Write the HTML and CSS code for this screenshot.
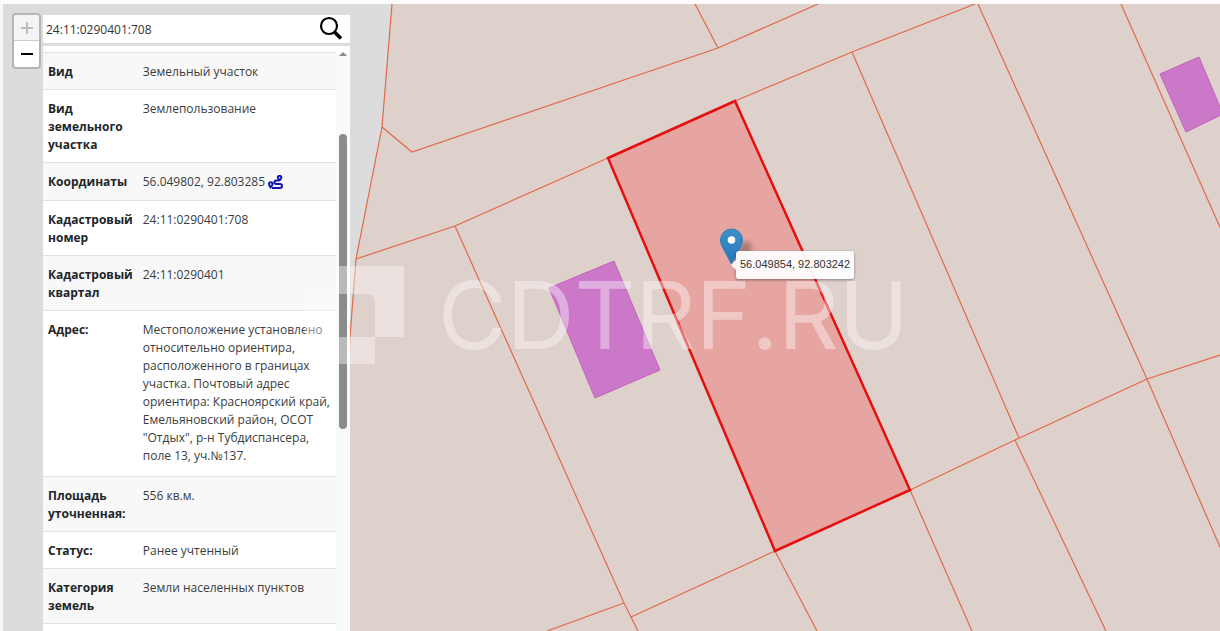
FILE: index.html
```html
<!DOCTYPE html>
<html lang="ru">
<head>
<meta charset="utf-8">
<meta name="viewport" content="width=device-width, initial-scale=1">
<title>Кадастровая карта</title>
<link rel="stylesheet" href="styles.css">
</head>
<body>
<main class="map">
  <svg class="map-canvas" aria-hidden="true">
    <g transform="translate(-3 -4)">
      <path class="land" d="M392 0 392 4 382 127 356 259 350 337 340 640 340 2000H4000V0Z"/>
      <g class="parcels">
        <path d="M392 4 382 127 356 259 350 337 340 640"/>
        <path d="M382 127 412 152 718 48 818 4"/>
        <path d="M695 4 718 48"/>
        <path d="M356 259 455 226 608 158 735 101 852 52 975 4"/>
        <path d="M455 226 624 603 631 617 638 631"/>
        <path d="M624 603 547 631"/>
        <path d="M631 617 775 551 910 490 1015 440 1147 379 1220 355 1317 323"/>
        <path d="M775 551 817 631"/>
        <path d="M910 490 972 631"/>
        <path d="M852 52 1019 438"/>
        <path d="M1015 440 1106 631"/>
        <path d="M978 4 1147 379 1223 554"/>
        <path d="M1121 4 1223 234"/>
      </g>
      <path class="building" d="M549 288 614 261 660 370 595 398Z"/>
      <path class="building" d="M1160 74 1199 57 1223 114 1186 132Z"/>
      <path class="selected" d="M608 158 735 101 910 490 775 551Z"/>
      <defs>
        <linearGradient id="pin" x1="0" y1="0" x2="0" y2="1">
          <stop offset="0" stop-color="#3f8fcb"/>
          <stop offset="1" stop-color="#2478b8"/>
        </linearGradient>
        <filter id="soft" x="-50%" y="-50%" width="200%" height="200%"><feGaussianBlur stdDeviation="2.500"/></filter>
      </defs>
      <path d="M732 263 742 242Q754 240 752 250Z" fill="#000" opacity=".25" filter="url(#soft)"/>
      <path d="M731.500 264 723 248Q720.500 244 720.500 240A11 11 0 0 1 742.500 240Q742.500 244 740 248Z" fill="url(#pin)" stroke="#2f7db9" stroke-width="1"/>
      <circle cx="731.500" cy="240" r="3.800" fill="#fff"/>
    </g>
  </svg>
  <div class="tooltip">56.049854, 92.803242</div>

  <div class="sidebar">
    <div class="zoom">
      <button type="button" aria-label="Приблизить" disabled>
        <svg width="12" height="12" viewBox="0 0 12 12"><path d="M0 6H12M6 0V12" stroke="#bbb" stroke-width="2"/></svg>
      </button>
      <button type="button" aria-label="Отдалить">
        <svg width="12" height="12" viewBox="0 0 12 12"><path d="M0 6H12" stroke="#000" stroke-width="2"/></svg>
      </button>
    </div>
    <div class="panel">
      <form class="search">
        <input type="text" value="24:11:0290401:708" aria-label="Кадастровый номер">
        <button type="submit" aria-label="Найти">
          <svg width="24" height="24" viewBox="0 0 24 24" fill="none" stroke="#000"><circle cx="10" cy="10" r="8" stroke-width="2.200"/><path d="M15.500 16 22 22.500" stroke-width="3.500"/></svg>
        </button>
      </form>
      <div class="results">
        <table>
          <tbody>
            <tr><th scope="row">Вид</th><td>Земельный участок</td></tr>
            <tr><th scope="row">Вид земельного участка</th><td>Землепользование</td></tr>
            <tr><th scope="row">Координаты</th><td>56.049802, 92.803285 <a class="route" href="#" aria-label="Маршрут"><svg width="15" height="14" viewBox="0 0 15 14" fill="none" stroke="#1414b4" stroke-width="2"><path d="M2.600 12.400C1.400 10.900 1 10 1 9A1.700 1.700 0 0 1 4.600 9C4.600 10 4 10.900 2.600 12.400Z"/><path d="M11.600 5.200C10.300 3.900 9.800 3.300 9.800 2.600A1.800 1.800 0 0 1 13.400 2.600C13.400 3.300 12.900 3.900 11.600 5.200Z"/><path d="M11 5.400H8.200A1.700 1.700 0 0 0 8.200 8.900H12A2 2 0 0 1 12 12.900H4"/></svg></a></td></tr>
            <tr><th scope="row">Кадастровый номер</th><td>24:11:0290401:708</td></tr>
            <tr><th scope="row">Кадастровый квартал</th><td>24:11:0290401</td></tr>
            <tr class="long"><th scope="row">Адрес:</th><td>Местоположение установлено относительно ориентира, расположенного в границах участка. Почтовый адрес ориентира: Красноярский край, Емельяновский район, ОСОТ "Отдых", р-н Тубдиспансера, поле 13, уч.№137.</td></tr>
            <tr><th scope="row">Площадь уточненная:</th><td>556 кв.м.</td></tr>
            <tr><th scope="row">Статус:</th><td>Ранее учтенный</td></tr>
            <tr><th scope="row">Категория земель</th><td>Земли населенных пунктов</td></tr>
          </tbody>
        </table>
        <div class="scrollbar"><span class="arrow"></span><span class="thumb"></span></div>
      </div>
    </div>
  </div>

  <div class="watermark">
    <svg width="99" height="98" viewBox="0 0 99 98" fill="#fff"><path d="M31 0H99V71H70V36Q70 28 62 28H31Z"/><path d="M0 28H31V71H70V98H8Q0 98 0 90Z"/></svg>
    <span>CDTRF.RU</span>
  </div>
</main>
</body>
</html>
```
FILE: styles.css
```css
* { box-sizing: border-box; }

body {
  margin: 0;
  background: #fcfcfd;
  font-family: "Open Sans", "Noto Sans", sans-serif;
  color: #212529;
}

.map {
  position: relative;
  height: 100vh;
  overflow: hidden;
  border-top: 4px solid #fcfcfd;
  border-left: 3px solid #f8f8f8;
  background: #dcdcdc;
}

.map-canvas {
  position: absolute;
  inset: 0;
  width: 100%;
  height: 100%;
}

.land { fill: #ded0cb; }
.parcels { fill: none; stroke: #e2694a; stroke-width: 1.2; }
.building { fill: #cc78c8; stroke: #c060bd; stroke-width: 1; }
.selected { fill: #e6a5a0; stroke: #e60f0f; stroke-width: 2.5; }

.tooltip {
  position: absolute;
  left: 733px;
  top: 247px;
  padding: 5px 4px 7px;
  border-radius: 3px;
  background: rgba(255, 255, 255, .93);
  box-shadow: 0 1px 3px rgba(0, 0, 0, .4);
  font: 11px/16px "Liberation Sans", Arial, sans-serif;
  color: #333;
  white-space: nowrap;
}

.tooltip::before {
  content: "";
  position: absolute;
  left: -5px;
  top: 9px;
  border: 5px solid transparent;
  border-left: 0;
  border-right-color: #fdf6f5;
}

.sidebar {
  position: relative;
  display: flex;
  align-items: flex-start;
  gap: 2px;
  height: 100%;
  padding: 9px 0 0 9px;
}

.zoom {
  display: flex;
  flex-direction: column;
  border: 2px solid #b5b5b5;
  border-radius: 4px;
  overflow: hidden;
}

.zoom button {
  display: grid;
  place-items: center;
  width: 25px;
  height: 26px;
  padding: 0;
  border: 0;
  background: #fff;
}

.zoom button:disabled {
  border-bottom: 1px solid #ccc;
  background: #f4f4f4;
}

.panel {
  display: flex;
  flex-direction: column;
  gap: 3px;
  width: 307px;
  height: 100%;
  padding-top: 2px;
}

.search {
  display: flex;
  height: 28px;
  flex: none;
  background: #fff;
}

.search input {
  flex: 1;
  min-width: 0;
  padding: 0 3px;
  border: 0;
  background: none;
  font: inherit;
  font-size: 12px;
  color: #333;
}

.search button {
  padding: 1px 7px 0;
  border: 0;
  background: none;
}

.results {
  display: flex;
  flex: 1;
  min-height: 0;
  padding-top: 6px;
  overflow: hidden;
  background: #fff;
}

table {
  flex: 1;
  height: fit-content;
  border-collapse: collapse;
  border-bottom: 1px solid #dee2e6;
  font-size: 12px;
  line-height: 18px;
}

th, td {
  padding: 10px 5px 8px;
  border-top: 1px solid #dee2e6;
  text-align: left;
  vertical-align: top;
}

th { width: 94px; font-weight: 700; }
td { color: #3a3d40; }
tr:nth-child(odd) { background: #f8f8f8; }
.long td { padding-bottom: 11px; }

.route svg { margin: 2px 0 3px; vertical-align: middle; }

.scrollbar {
  display: flex;
  flex-direction: column;
  align-items: center;
  gap: 78px;
  width: 14px;
  background: #fafafa;
}

.arrow {
  border: 4px solid transparent;
  border-top: 0;
  border-bottom-color: #8b8b8b;
}

.thumb {
  width: 8px;
  height: 295px;
  border-radius: 4px;
  background: #8b8b8b;
}

.watermark {
  position: absolute;
  left: 302px;
  top: 262px;
  display: flex;
  align-items: center;
  gap: 34px;
  opacity: .4;
  color: #fff;
  font: 400 94px/98px Inter, sans-serif;
  font-kerning: none;
  pointer-events: none;
}
```
